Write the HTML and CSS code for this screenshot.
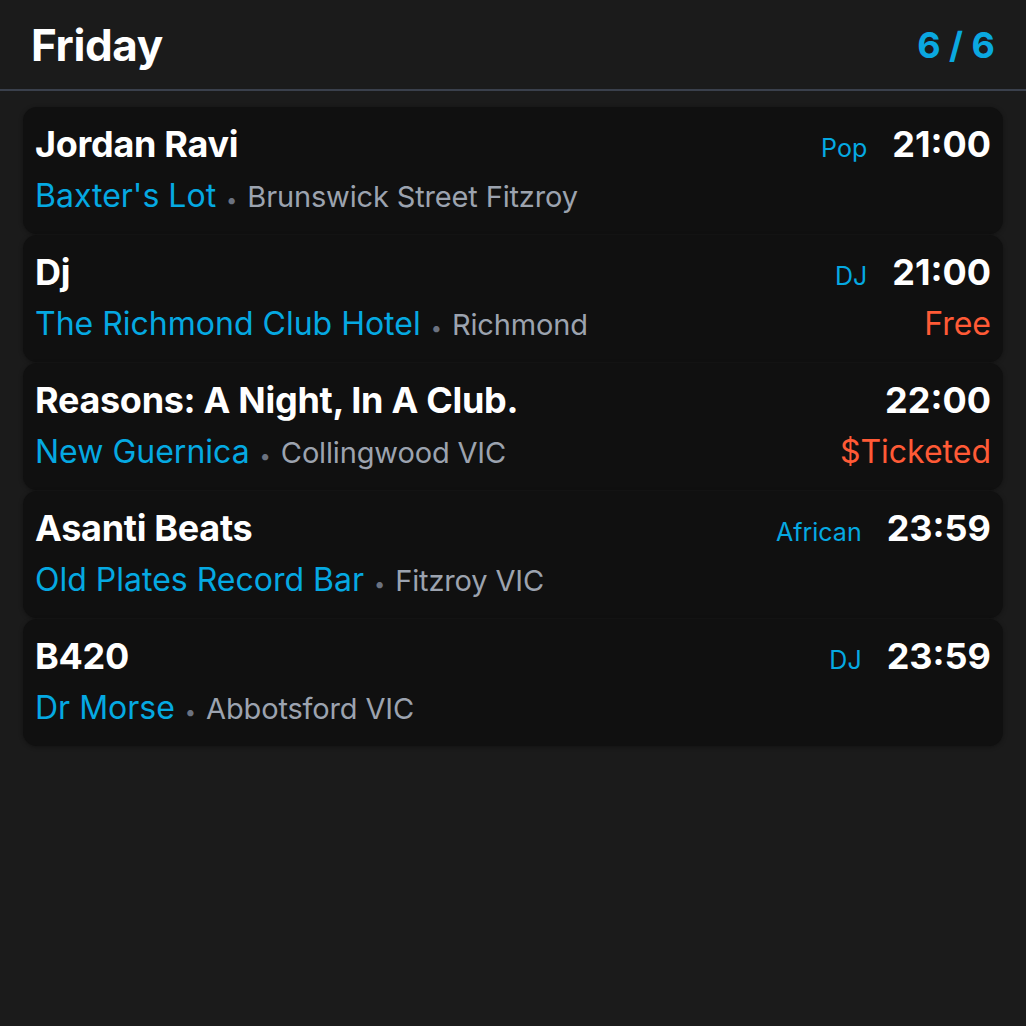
FILE: index.html
```html
<!DOCTYPE html>
<html>
<head>
<meta charset="utf-8">
<link rel="stylesheet" href="styles.css">
</head>
<body>
<div class="app">
  <header class="header">
    <h1 class="day">Friday</h1>
    <div class="count">6 / 6</div>
  </header>
  <main class="list">
    <div class="card">
      <div class="row top">
        <div class="title">Jordan Ravi</div>
        <div class="meta"><span class="genre">Pop</span><span class="time">21:00</span></div>
      </div>
      <div class="row bottom">
        <div class="place"><span class="venue">Baxter's Lot</span><span class="dot">•</span><span class="area">Brunswick Street Fitzroy</span></div>
      </div>
    </div>
    <div class="card">
      <div class="row top">
        <div class="title">Dj</div>
        <div class="meta"><span class="genre">DJ</span><span class="time">21:00</span></div>
      </div>
      <div class="row bottom">
        <div class="place"><span class="venue">The Richmond Club Hotel</span><span class="dot">•</span><span class="area">Richmond</span></div>
        <div class="price">Free</div>
      </div>
    </div>
    <div class="card">
      <div class="row top">
        <div class="title">Reasons: A Night, In A Club.</div>
        <div class="meta"><span class="time">22:00</span></div>
      </div>
      <div class="row bottom">
        <div class="place"><span class="venue">New Guernica</span><span class="dot">•</span><span class="area">Collingwood VIC</span></div>
        <div class="price">$Ticketed</div>
      </div>
    </div>
    <div class="card">
      <div class="row top">
        <div class="title">Asanti Beats</div>
        <div class="meta"><span class="genre">African</span><span class="time">23:59</span></div>
      </div>
      <div class="row bottom">
        <div class="place"><span class="venue">Old Plates Record Bar</span><span class="dot">•</span><span class="area">Fitzroy VIC</span></div>
      </div>
    </div>
    <div class="card">
      <div class="row top">
        <div class="title">B420</div>
        <div class="meta"><span class="genre">DJ</span><span class="time">23:59</span></div>
      </div>
      <div class="row bottom">
        <div class="place"><span class="venue">Dr Morse</span><span class="dot">•</span><span class="area">Abbotsford VIC</span></div>
      </div>
    </div>
  </main>
</div>
</body>
</html>
```
FILE: styles.css
```css
* { box-sizing: border-box; }
html, body {
  margin: 0;
  padding: 0;
  background: #1b1b1b;
  font-family: Inter, "Noto Sans", sans-serif;
  color: #ffffff;
}
.app {
  width: 1026px;
  min-height: 1026px;
}
.header {
  display: flex;
  justify-content: space-between;
  align-items: center;
  height: 91px;
  padding: 0 31px 0 31px;
  border-bottom: 2px solid #3a404c;
}
.day {
  margin: 0;
  font-size: 44px;
  font-weight: 700;
  letter-spacing: -0.4px;
}
.count {
  font-size: 36px;
  font-weight: 700;
  color: #0aa8e0;
}
.list {
  display: flex;
  flex-direction: column;
  gap: 1px;
  padding: 16px 23px;
}
.card {
  background: #101010;
  border-radius: 14px;
  padding: 11px 12px 8px 12px;
  box-shadow: 0 1px 4px rgba(0,0,0,0.35);
  display: flex;
  flex-direction: column;
}
.row {
  display: flex;
  justify-content: space-between;
  align-items: baseline;
}
.title {
  font-size: 36px;
  font-weight: 700;
  line-height: 52px;
  letter-spacing: -0.3px;
}
.meta {
  display: flex;
  align-items: baseline;
  gap: 25px;
}
.genre {
  font-size: 25px;
  color: #05a9e2;
}
.time {
  font-size: 36px;
  font-weight: 700;
}
.place {
  display: flex;
  align-items: baseline;
  line-height: 52px;
}
.venue {
  font-size: 32px;
  color: #05a9e2;
}
.dot {
  font-size: 20px;
  color: #6b7280;
  margin: 0 10px;
}
.area {
  font-size: 29px;
  letter-spacing: -0.15px;
  color: #9ca3af;
}
.price {
  font-size: 32px;
  color: #ff5a36;
}
```
